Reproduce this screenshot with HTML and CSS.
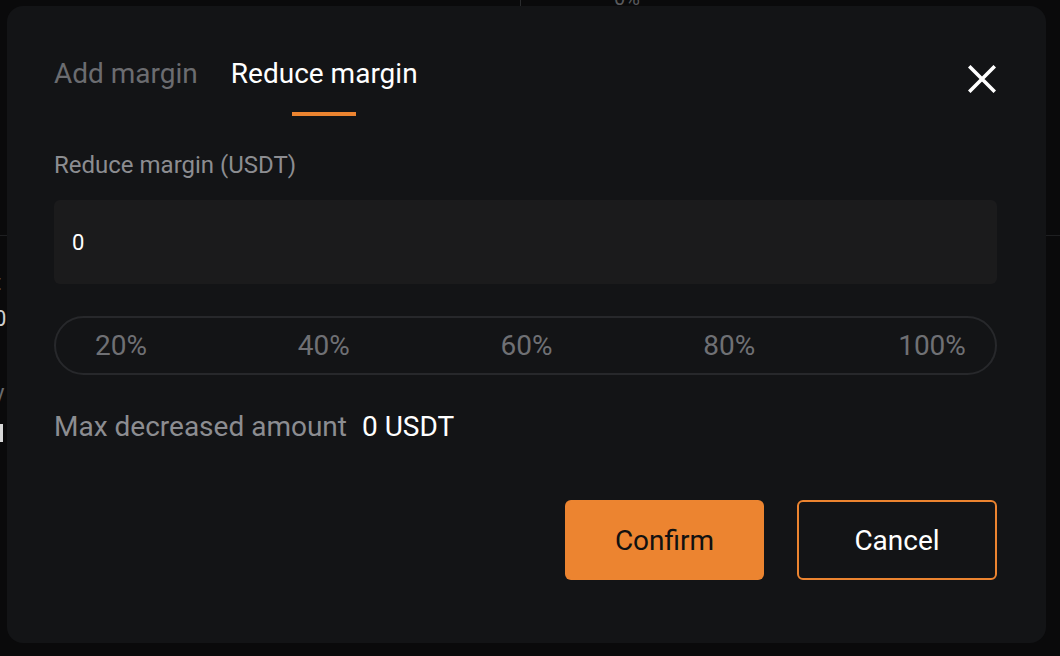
FILE: index.html
```html
<!DOCTYPE html>
<html lang="en">
<head>
<meta charset="utf-8">
<title>Reduce margin</title>
<link rel="stylesheet" href="styles.css">
</head>
<body>
<div class="backdrop">
  <div class="bg-vline"></div>
  <div class="bg-pct">0%</div>
  <div class="bg-hline bg-hline-left"></div>
  <div class="bg-hline bg-hline-right"></div>
  <div class="bg-frag bg-frag-t">t</div>
  <div class="bg-frag bg-frag-0">0</div>
  <div class="bg-frag bg-frag-y">y</div>
  <div class="bg-frag bg-frag-bar"></div>
</div>

<div class="dialog">
  <div class="header">
    <div class="tabs">
      <div class="tab">
        <span class="tab-label">Add margin</span>
        <span class="tab-ink"></span>
      </div>
      <div class="tab tab-active">
        <span class="tab-label">Reduce margin</span>
        <span class="tab-ink"></span>
      </div>
    </div>
    <button class="close" aria-label="Close">
      <svg width="28" height="28" viewBox="0 0 28 28">
        <path d="M2.5 2.5 L25.5 25.5 M25.5 2.5 L2.5 25.5" stroke="#ffffff" stroke-width="3.6" stroke-linecap="square" fill="none"/>
      </svg>
    </button>
  </div>

  <div class="field-label">Reduce margin (USDT)</div>
  <div class="input"><span class="input-value">0</span></div>

  <div class="pct-bar">
    <span class="pct">20%</span>
    <span class="pct">40%</span>
    <span class="pct">60%</span>
    <span class="pct">80%</span>
    <span class="pct">100%</span>
  </div>

  <div class="max-row">
    <span class="max-label">Max decreased amount</span>
    <span class="max-value">0 USDT</span>
  </div>

  <div class="actions">
    <button class="btn btn-confirm">Confirm</button>
    <button class="btn btn-cancel">Cancel</button>
  </div>
</div>
</body>
</html>
```

FILE: styles.css
```css
* {
  box-sizing: border-box;
}

html, body {
  margin: 0;
  padding: 0;
}

body {
  width: 1060px;
  height: 656px;
  overflow: hidden;
  background: #0a0a0b;
  font-family: Roboto, "Liberation Sans", sans-serif;
  color: #ffffff;
  position: relative;
}

/* background page fragments (behind the modal) */
.backdrop {
  position: absolute;
  inset: 0;
}

.bg-vline {
  position: absolute;
  left: 520px;
  top: 0;
  width: 1px;
  height: 8px;
  background: #2a2b2d;
}

.bg-pct {
  position: absolute;
  left: 614px;
  top: -14px;
  font-size: 20px;
  color: #5a5b5e;
}

.bg-hline {
  position: absolute;
  top: 235px;
  height: 1px;
  background: #1e1f21;
}

.bg-hline-left {
  left: 0;
  width: 8px;
}

.bg-hline-right {
  left: 1045px;
  width: 15px;
}

.bg-frag {
  position: absolute;
  left: -6px;
  font-size: 22px;
  color: #6a6b6e;
}

.bg-frag-t { top: 270px; }
.bg-frag-0 { top: 306px; color: #d0d0d0; }
.bg-frag-y { top: 380px; }

.bg-frag-bar {
  left: 0;
  top: 424px;
  width: 3px;
  height: 18px;
  background: #d8d8d8;
}

/* modal */
.dialog {
  position: absolute;
  left: 7px;
  top: 6px;
  width: 1039px;
  height: 637px;
  background: #131416;
  border-radius: 16px;
  padding: 50px 49px 0 47px;
  display: flex;
  flex-direction: column;
}

.header {
  display: flex;
  justify-content: space-between;
  align-items: flex-start;
}

.tabs {
  display: flex;
  gap: 33px;
}

.tab {
  display: flex;
  flex-direction: column;
  align-items: center;
  gap: 20px;
}

.tab-label {
  font-size: 28px;
  line-height: 36px;
  color: #6b6c70;
  white-space: nowrap;
}

.tab-ink {
  width: 64px;
  height: 4px;
  background: transparent;
}

.tab-active .tab-label {
  color: #ffffff;
}

.tab-active .tab-ink {
  background: #ec8430;
}

.close {
  margin-top: 9px;
  padding: 0;
  width: 28px;
  height: 28px;
  border: none;
  background: transparent;
  display: flex;
  margin-right: 1px;
}

.field-label {
  margin-top: 34px;
  font-size: 24px;
  line-height: 30px;
  color: #8c8d91;
}

.input {
  margin-top: 20px;
  height: 84px;
  background: #1b1b1c;
  border-radius: 6px;
  display: flex;
  align-items: center;
  padding-left: 18px;
}

.input-value {
  font-size: 22px;
  color: #ffffff;
}

.pct-bar {
  margin-top: 32px;
  height: 59px;
  border: 2px solid #27282b;
  border-radius: 30px;
  display: flex;
  align-items: center;
  justify-content: space-between;
  padding: 0 29px 0 31px;
}

.pct {
  width: 68px;
  text-align: center;
  font-size: 28px;
  line-height: 36px;
  color: #6f7074;
}

.max-row {
  margin-top: 34px;
  display: flex;
  gap: 15px;
  font-size: 28px;
  line-height: 36px;
}

.max-label {
  color: #8c8d91;
}

.max-value {
  color: #ffffff;
}

.actions {
  margin-top: 55px;
  display: flex;
  justify-content: flex-end;
  gap: 33px;
}

.btn {
  width: 199px;
  height: 80px;
  border-radius: 6px;
  font-family: Roboto, "Liberation Sans", sans-serif;
  font-size: 28px;
  cursor: pointer;
}

.btn-confirm {
  background: #ec8430;
  border: none;
  color: #111111;
}

.btn-cancel {
  width: 200px;
  background: transparent;
  border: 2px solid #ec8430;
  color: #ffffff;
}
```
